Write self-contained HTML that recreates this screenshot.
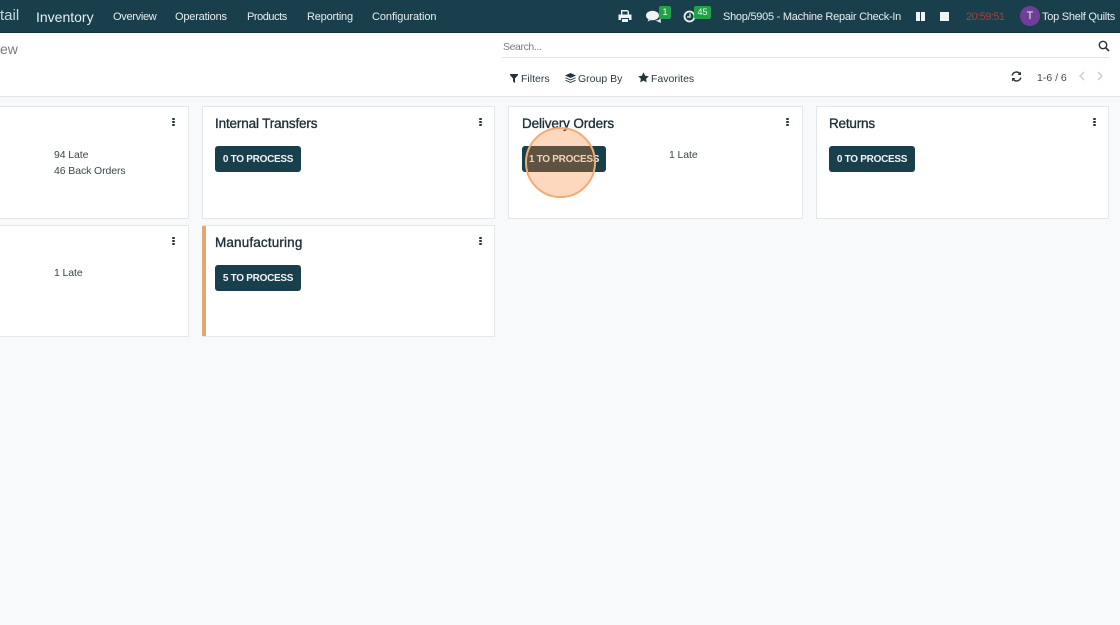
<!DOCTYPE html>
<html><head><meta charset="utf-8"><style>
html,body{margin:0;padding:0;width:1120px;height:625px;overflow:hidden;background:#f8f9fb;font-family:"Liberation Sans",sans-serif;color:#1f2d33}
div,span,svg{position:absolute;white-space:nowrap}
.nav{left:0;top:0;width:1120px;height:32px;background:#1a3f4c;box-shadow:0 1px 0 #14323c}
.n{top:10px;font-size:11px;line-height:15px;color:#e4eeee}
.card{background:#fff;border:1px solid #e4e7ea;box-sizing:border-box;height:113px}
.title{font-size:13.5px;line-height:18px;color:#1f2f36;font-weight:400;-webkit-text-stroke:.35px #1f2f36}
.btn{background:#1a3f4c;border-radius:3px;height:26px;color:#f0f3f3;font-size:10px;letter-spacing:-.28px;line-height:28px;font-weight:700;text-align:center;width:86px}
.t{font-size:10.5px;line-height:14px;color:#3b464b;letter-spacing:-.1px}
.k{width:3px;height:8px}
.k i{position:absolute;left:0;width:3px;height:2.3px;background:#26343a;border-radius:1px}
.f{font-size:10.5px;line-height:14px;color:#2a3a41;top:71px}
</style></head><body>
<div class="nav"></div>
<div class="n" style="left:0;top:7px;font-size:15px;line-height:18px;color:#c9d6d8">tail</div>
<div class="n" style="left:36px;top:8px;font-size:14px;line-height:18px">Inventory</div>
<div class="n" style="left:113px;letter-spacing:-.3px">Overview</div>
<div class="n" style="left:175px;letter-spacing:-.2px">Operations</div>
<div class="n" style="left:247px;letter-spacing:-.45px">Products</div>
<div class="n" style="left:307px;letter-spacing:-.2px">Reporting</div>
<div class="n" style="left:372px;letter-spacing:-.08px">Configuration</div>

<svg style="left:618px;top:9px" width="14" height="14" viewBox="0 0 14 14"><path d="M3 6V1h6.500L11 2.500V6H9.600V2.500H4.400V6zM.500 5.500h13V11h-2.500V9H3v2H.500zM4 10h6v3H4z" fill="#eef3f3"/></svg>
<svg style="left:646px;top:10px" width="16" height="14" viewBox="0 0 16 14"><ellipse cx="6.500" cy="5.500" rx="6.500" ry="4.800" fill="#eef3f3"/><path d="M3 8L1.500 11.500 6.500 9.500zM9 10.500c2.500 0 4-.5 5.500-2.500l.5 5-3.500-1.500z" fill="#dfe8e8"/></svg>
<div style="left:659px;top:6px;width:12px;height:13px;background:#22a04a;border-radius:2px;color:#eef8ee;font-size:9px;line-height:13px;text-align:center">1</div>
<svg style="left:683px;top:10px" width="13" height="13" viewBox="0 0 13 13"><circle cx="6.500" cy="6.500" r="5" fill="none" stroke="#eef3f3" stroke-width="1.800"/><path d="M7 3.500V7H4" fill="none" stroke="#eef3f3" stroke-width="1.300"/></svg>
<div style="left:694px;top:6px;width:17px;height:13px;background:#22a04a;border-radius:2px;color:#eef8ee;font-size:9px;line-height:13px;text-align:center">45</div>
<div class="n" style="left:723px;letter-spacing:-.26px">Shop/5905 - Machine Repair Check-In</div>
<div style="left:916px;top:12px;width:4px;height:9px;background:#f1f4f4"></div>
<div style="left:921px;top:12px;width:4px;height:9px;background:#f1f4f4"></div>
<div style="left:940px;top:12px;width:9px;height:9px;background:#f1f4f4"></div>
<div class="n" style="left:966px;color:#9a4545;letter-spacing:-.55px">20:59:51</div>
<div style="left:1020px;top:6px;width:20px;height:20px;border-radius:50%;background:#6f3f98;color:#efe8f3;font-size:11px;line-height:20px;text-align:center">T</div>
<div class="n" style="left:1042px;letter-spacing:-.25px">Top Shelf Quilts</div>

<div style="left:0;top:33px;width:1120px;height:63px;background:#fff;border-bottom:1px solid #e3e5e8"></div>
<div style="left:0;top:41px;font-size:14px;line-height:16px;color:#767b7e">ew</div>
<div style="left:503px;top:40px;font-size:10.5px;line-height:14px;color:#777e82;letter-spacing:-.4px">Search...</div>
<div style="left:502px;top:57px;width:608px;height:1px;background:#e4e6e8"></div>
<svg style="left:1098px;top:40px" width="12" height="12" viewBox="0 0 12 12"><circle cx="5" cy="5" r="3.700" fill="none" stroke="#26343a" stroke-width="1.400"/><path d="M7.800 7.800L11 11" stroke="#26343a" stroke-width="1.600"/></svg>

<svg style="left:510px;top:74px" width="8" height="9" viewBox="0 0 8 9"><path d="M0 0h8v1L5 4.500V9L3 7.500v-3L0 1z" fill="#22343c"/></svg>
<div class="f" style="left:521px;top:72px">Filters</div>
<svg style="left:565px;top:73px" width="11" height="11" viewBox="0 0 11 11"><path d="M5.500 0L11 2.500 5.500 5 0 2.500z" fill="#22343c"/><path d="M1 4.500L5.500 6.500 10 4.500 11 5 5.500 7.500 0 5zM1 7L5.500 9 10 7 11 7.500 5.500 10 0 7.500z" fill="#22343c"/></svg>
<div class="f" style="left:578px;top:72px">Group By</div>
<svg style="left:638px;top:72px" width="11" height="11" viewBox="0 0 11 11"><path d="M5.500 .3L7.100 3.700 10.800 4.200 8.100 6.700 8.800 10.400 5.500 8.600 2.200 10.400 2.900 6.700 .2 4.200 3.900 3.700z" fill="#22343c"/></svg>
<div class="f" style="left:651px;top:72px">Favorites</div>

<svg style="left:1011px;top:71px" width="11" height="11" viewBox="0 0 11 11"><path d="M1.200 4.500A4.300 4.300 0 0 1 8.700 2.600M9.800 6.500A4.300 4.300 0 0 1 2.300 8.400" fill="none" stroke="#2a383e" stroke-width="1.500"/><path d="M10 .5V4H6.500zM1 10.500V7H4.500z" fill="#2a383e"/></svg>
<div class="f" style="left:1037px;color:#3f4a4f;top:71px">1-6 / 6</div>
<svg style="left:1078px;top:71px" width="8" height="10" viewBox="0 0 8 10"><path d="M6 1L2 5l4 4" fill="none" stroke="#cfd3d6" stroke-width="1.600"/></svg>
<svg style="left:1096px;top:71px" width="8" height="10" viewBox="0 0 8 10"><path d="M2 1l4 4-4 4" fill="none" stroke="#cfd3d6" stroke-width="1.600"/></svg>

<div class="card" style="left:-10px;top:106px;width:199px"></div>
<div class="card" style="left:202px;top:106px;width:293px"></div>
<div class="card" style="left:508px;top:106px;width:295px"></div>
<div class="card" style="left:816px;top:106px;width:293px"></div>
<div class="card" style="left:-10px;top:225px;width:199px;height:112px"></div>
<div class="card" style="left:202px;top:225px;width:293px;height:112px"></div>
<div style="left:202px;top:226px;width:4px;height:110px;background:#e8a66f"></div>

<div class="k" style="left:172px;top:118px"><i style="top:0"></i><i style="top:2.800px"></i><i style="top:5.600px"></i></div>
<div class="k" style="left:479px;top:118px"><i style="top:0"></i><i style="top:2.800px"></i><i style="top:5.600px"></i></div>
<div class="k" style="left:786px;top:118px"><i style="top:0"></i><i style="top:2.800px"></i><i style="top:5.600px"></i></div>
<div class="k" style="left:1093px;top:118px"><i style="top:0"></i><i style="top:2.800px"></i><i style="top:5.600px"></i></div>
<div class="k" style="left:172px;top:237px"><i style="top:0"></i><i style="top:2.800px"></i><i style="top:5.600px"></i></div>
<div class="k" style="left:479px;top:237px"><i style="top:0"></i><i style="top:2.800px"></i><i style="top:5.600px"></i></div>

<div class="title" style="left:215px;top:115px;letter-spacing:-.15px">Internal Transfers</div>
<div class="title" style="left:522px;top:115px;letter-spacing:-.12px">Delivery Orders</div>
<div class="title" style="left:829px;top:115px;letter-spacing:-.2px">Returns</div>
<div class="title" style="left:215px;top:234px;letter-spacing:.15px">Manufacturing</div>

<div class="btn" style="left:215px;top:146px">0 TO PROCESS</div>
<div class="btn" style="left:522px;top:146px;width:84px">1 TO PROCESS</div>
<div class="btn" style="left:829px;top:146px">0 TO PROCESS</div>
<div class="btn" style="left:215px;top:265px">5 TO PROCESS</div>

<div class="t" style="left:54px;top:148px">94 Late</div>
<div class="t" style="left:54px;top:164px">46 Back Orders</div>
<div class="t" style="left:54px;top:266px">1 Late</div>
<div class="t" style="left:669px;top:148px">1 Late</div>

<div style="left:525px;top:127px;width:71px;height:71px;box-sizing:border-box;border-radius:50%;background:rgba(248,130,46,.31);border:2.500px solid #f2ab72"></div>
</body></html>
